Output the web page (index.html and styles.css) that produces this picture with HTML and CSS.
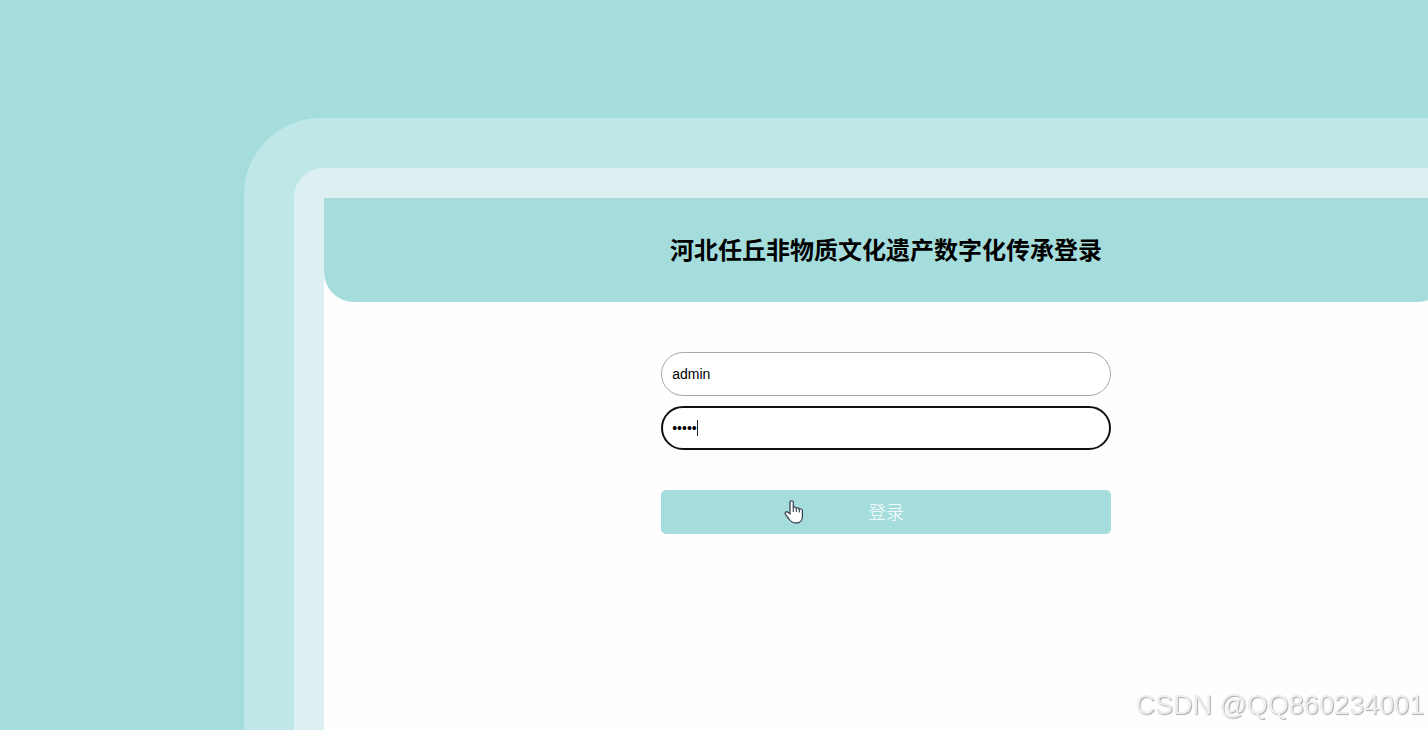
FILE: index.html
```html
<!DOCTYPE html>
<html lang="zh-CN">
<head>
  <meta charset="UTF-8">
  <title>河北任丘非物质文化遗产数字化传承登录</title>
  <link rel="stylesheet" href="styles.css">
</head>
<body>
  <div class="login-box">
    <div class="login-header">
      <h2>河北任丘非物质文化遗产数字化传承登录</h2>
    </div>
    <form class="login-form">
      <input type="text" class="field" name="username" aria-label="用户名" value="admin">
      <div class="password-row">
        <input type="password" class="field active" name="password" aria-label="密码" value="admin">
        <span class="caret"></span>
      </div>
      <button type="button" class="login-btn">登录
        <svg class="pointer" viewBox="0 0 20 26" width="20" height="26" aria-hidden="true">
          <path d="M6 15V3.500C6 1.200 9.300 1.200 9.300 3.500V8.500C9.800 7.700 12.300 7.900 12.300 9.300C13 8.500 15.300 8.900 15.300 10.200C16.200 9.500 18.400 9.900 18.400 11.600V17.500C18.400 21.500 15.800 24 12 24C8.500 24 6.600 22.300 5 20L1.500 15.300C.4 13.500 2.500 11.900 4 13.300Z" fill="#fff" stroke="#3d4657" stroke-width="1.300" stroke-linejoin="round"/>
          <path d="M9.300 8.500V12.500M12.300 9.500V12.500M15.300 10.300V13" fill="none" stroke="#3d4657" stroke-width="1.200" stroke-linecap="round"/>
        </svg>
      </button>
    </form>
  </div>
  <div class="watermark">CSDN @QQ860234001</div>
</body>
</html>
```
FILE: styles.css
```css
* {
  box-sizing: border-box;
}
body {
  margin: 0;
  min-height: 100vh;
  padding: 168px 0 0 294px;
  background: #a5dddd;
  font-family: "Liberation Sans", "Noto Sans CJK SC", sans-serif;
  overflow: hidden;
}
/* the box runs past the right edge of the window */
.login-box {
  margin-right: -50px;
  min-height: calc(100vh - 168px);
  border: 30px solid #dcf0f2;
  border-bottom: none;
  border-radius: 30px 30px 0 0;
  box-shadow: 0 0 0 50px #bfe7e7;
  background: #fefefe;
}
.login-header {
  padding: 35px 0 33px;
  background: #a5dddd;
  border-radius: 0 0 30px 30px;
  text-align: center;
}
.login-header h2 {
  margin: 0;
  font-size: 24px;
  line-height: 36px;
  color: #000;
}
.login-form {
  width: 40%;
  margin: 50px auto 0;
  display: flex;
  flex-direction: column;
  gap: 10px;
}
.field {
  display: block;
  width: 100%;
  height: 44px;
  padding: 0 10px;
  border: 1px solid #a8a8ac;
  border-radius: 22px;
  background: #fff;
  color: #000;
  font-family: "Liberation Sans", Arial, sans-serif;
  font-size: 14px;
  outline: none;
}
.field.active {
  padding: 0 9px;
  border: 2px solid #111;
}
.password-row {
  position: relative;
}
.caret {
  position: absolute;
  left: 36px;
  top: 14px;
  width: 1px;
  height: 16px;
  background: #222;
}
.login-btn {
  position: relative;
  height: 44px;
  margin-top: 30px;
  padding: 0 0 2px;
  border: none;
  border-radius: 5px;
  background: #a5dddd;
  color: #fff;
  font-family: "Noto Sans CJK SC", sans-serif;
  font-size: 18px;
  font-weight: 300;
  cursor: pointer;
}
.pointer {
  position: absolute;
  left: 123px;
  top: 9px;
}
.watermark {
  position: fixed;
  right: 4px;
  bottom: 8px;
  font-size: 27px;
  line-height: 34px;
  color: #eee;
  text-shadow: 1px 1px 1px #aaa;
}
```
